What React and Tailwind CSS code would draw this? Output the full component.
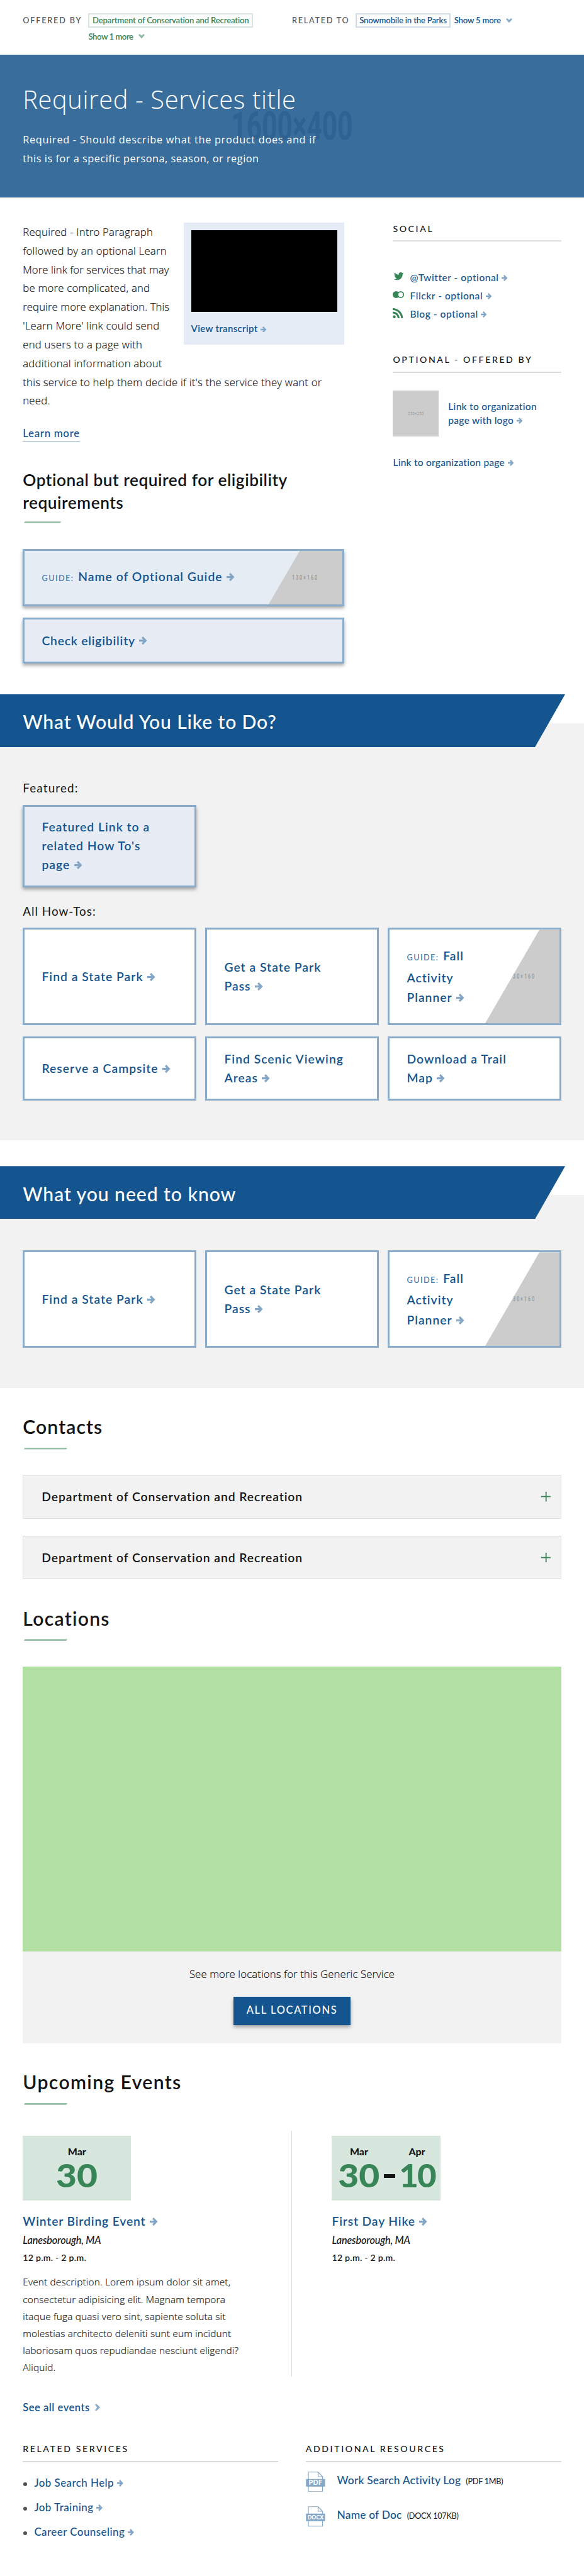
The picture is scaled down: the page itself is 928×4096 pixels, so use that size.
import React from "react";

function Arrow({ className = "w-[14px] h-[14.5px] ml-[7px]" }) {
  return (
    <svg viewBox="0 0 14 14" preserveAspectRatio="none" className={"inline-block align-baseline text-[#83a6c6] " + className} fill="none" stroke="currentColor" strokeWidth="3.500">
      <path d="M0 7h11" />
      <path d="M5.600 1.200L11.400 7 5.600 12.800" />
    </svg>
  );
}

const SMALL_ARROW = "w-[10.500px] h-[11px] ml-[5px]";

function ChevronDown({ className }) {
  return (
    <svg viewBox="0 0 11 8" className={"inline-block w-[11px] h-[8px] ml-[9px] align-[1px] " + className} fill="currentColor">
      <path d="M0 1.900L2.100 0L5.500 3.100L8.900 0L11 1.900L5.500 8Z" />
    </svg>
  );
}

function TwitterIcon() {
  return (
    <svg viewBox="0 0 24 20" className="w-[17px] h-[14px] mt-[7px] ml-[1.5px]" fill="#388557">
      <path d="M24 2.4c-.9.4-1.8.7-2.8.8 1-.6 1.8-1.6 2.2-2.7-1 .6-2 1-3.1 1.2A4.9 4.9 0 0 0 11.9 6.200C7.800 6 4.200 4 1.700.900a4.900 4.900 0 0 0 1.500 6.600c-.8 0-1.600-.2-2.200-.6v.1c0 2.400 1.700 4.400 3.900 4.800-.7.2-1.500.2-2.200.1.6 2 2.400 3.400 4.600 3.400A9.900 9.900 0 0 1 0 17.300 14 14 0 0 0 7.500 19.500c9.100 0 14-7.500 14-14v-.6c1-.7 1.800-1.600 2.500-2.500z" />
    </svg>
  );
}

function FlickrIcon() {
  return (
    <svg viewBox="0 0 20 12" className="w-[20px] h-[12px] mt-[8px]">
      <circle cx="6" cy="6" r="6" fill="#388557" />
      <circle cx="14" cy="6" r="5" fill="#fff" stroke="#388557" strokeWidth="1.900" />
    </svg>
  );
}

function RssIcon() {
  return (
    <svg viewBox="0 0 18 18" className="w-[18px] h-[18px] mt-[5px]" fill="none" stroke="#388557">
      <circle cx="2.700" cy="15.300" r="2.500" fill="#388557" stroke="none" />
      <path d="M0 7.600A10.400 10.400 0 0 1 10.400 18" strokeWidth="3.300" />
      <path d="M0 1.700A16.300 16.300 0 0 1 16.300 18" strokeWidth="3.300" />
    </svg>
  );
}

function DocIcon({ label }) {
  return (
    <svg viewBox="0 0 34 36" className="w-[34px] h-[36px] shrink-0">
      <path d="M4.500 .8H21.500L29.300 8.800V35H4.500Z" fill="#fff" stroke="#86a8c8" strokeWidth="1.300" />
      <path d="M21.500 .8V8.800H29.300" fill="none" stroke="#86a8c8" strokeWidth="1.300" />
      <rect x="0.300" y="13" width="33.400" height="13.300" fill="#86a8c8" />
      <text x="17" y="23.600" textAnchor="middle" fontFamily="Lato, sans-serif" fontWeight="900" fontSize={label === "PDF" ? 11.5 : 10.5} fill="#fff" textLength={label === "PDF" ? 24 : 28} lengthAdjust="spacingAndGlyphs">
        {label}
      </text>
    </svg>
  );
}

function SideHeading({ className = "", children }) {
  return (
    <h3 className={"text-[15.6px] leading-[24px] font-medium tracking-[2.85px] pb-[9px] border-b-[2.3px] border-[#dcdcdc] whitespace-nowrap " + className}>
      {children}
    </h3>
  );
}

function Heading({ className = "", children }) {
  return (
    <h2 className={"mt-[47.8px] text-[33.3px] leading-[40px] font-semibold " + className}>
      {children}
      <span className="block mt-[17.2px] ml-[2px] w-[76px] h-[3px] bg-[#96c0a8] [clip-path:polygon(1.500px_0,100%_0,calc(100%-1.500px)_100%,0_100%)]" />
    </h2>
  );
}

function Band({ className, children }) {
  return (
    <div className="-mt-[51px] w-[991px] h-[93px] pl-[40px] pt-[28px] bg-[#14558f] [clip-path:polygon(0_0,100%_0,938px_100%,0_100%)]">
      <h2 className={"text-[33.3px] leading-[40px] font-medium text-white " + className}>{children}</h2>
    </div>
  );
}

function Placeholder({ className }) {
  return (
    <div className={"absolute right-0 top-0 bottom-0 w-[130px] bg-[#cccccc] flex items-center justify-center " + className}>
      <span className="font-['Roboto',sans-serif] text-[13px] font-medium tracking-[3.400px] leading-none text-[#979797] scale-x-[0.62] whitespace-nowrap">
        130×160
      </span>
    </div>
  );
}

function GuideLabel() {
  return <span className="text-[14px] font-medium tracking-[1.6px] text-[#4478a8] mr-[7.5px]">GUIDE:</span>;
}

function Card({ lines, guide, tone = "bg-white", className = "" }) {
  return (
    <a className={"relative flex items-center border-[3.4px] border-[#8aabca] pl-[30px] text-[21.3px] font-semibold text-[#14558f] tracking-[1.12px] whitespace-nowrap " + tone + " " + className}>
      {guide && <Placeholder className="[clip-path:polygon(95px_0,100%_0,100%_100%,0_100%)]" />}
      <span className={"relative " + (guide ? "leading-[35px]" : "leading-[33px]")}>
        {lines.map((line, i) => (
          <span key={line} className="block">
            {guide && i === 0 && <GuideLabel />}
            {line}
            {i === lines.length - 1 && <Arrow />}
          </span>
        ))}
      </span>
    </a>
  );
}

function Accordion({ className }) {
  return (
    <div className={"h-[76.5px] flex items-center justify-between bg-[#f2f2f2] border-y-[2px] border-x border-[#dcdcdc] pl-[32px] pr-[17px] " + className}>
      <span className="text-[21.3px] leading-[33px] font-semibold tracking-[1.04px]">Department of Conservation and Recreation</span>
      <svg viewBox="0 0 17 17" className="w-[17px] h-[17px]" stroke="#388557" strokeWidth="2">
        <path d="M0 8.500h17M8.500 0v17" />
      </svg>
    </div>
  );
}

function EventBody({ title }) {
  return (
    <>
      <h3 className="mt-[21.5px] text-[21.3px] leading-[30px] font-semibold tracking-[0.94px] text-[#14558f]">
        {title}
        <Arrow />
      </h3>
      <p className="mt-[3.5px] text-[18px] leading-[28px] italic font-medium tracking-[-0.2px]">Lanesborough, MA</p>
      <p className="mt-[5px] text-[15.6px] leading-[24px] font-semibold tracking-[0.28px]">12 p.m. - 2 p.m.</p>
    </>
  );
}

const LIGHT = "font-['Open_Sans',sans-serif] font-light whitespace-nowrap ";
const INK = "[-webkit-text-stroke:0.2px_#141414] ";

export default function App() {
  return (
    <div className="w-[1024px] h-[4520px] [zoom:0.90625] overflow-hidden bg-white text-[#141414] font-['Lato',sans-serif] flex flex-col">
      <header className="h-[96px] pt-[23px] pl-[40px] flex shrink-0 text-[14.5px] font-semibold tracking-[-0.2px] leading-[26px]">
        <div className="w-[472px] flex">
          <div className="w-[115px] text-[14px] font-medium tracking-[2px] leading-[25px] text-[#535353]">OFFERED BY</div>
          <div className="text-[#388557]">
            <div className="h-[25px] border-[2.3px] border-[#d7e6dd] px-[5px] leading-[20px]">Department of Conservation and Recreation</div>
            <div className="mt-[3.4px] tracking-[-0.5px]">
              Show 1 more
              <ChevronDown className="text-[#8dbaa0]" />
            </div>
          </div>
        </div>
        <div className="w-[111px] text-[14px] font-medium tracking-[1.9px] leading-[25px] text-[#535353]">RELATED TO</div>
        <div className="h-[25px] border-[2.3px] border-[#d0dce9] px-[5px] leading-[20px] text-[#14558f]">Snowmobile in the Parks</div>
        <div className="ml-[6px] leading-[25px] text-[#14558f]">
          Show 5 more
          <ChevronDown className="text-[#8aabca]" />
        </div>
      </header>

      <section className="relative h-[250px] shrink-0 bg-[#396d9c] pl-[40px] pt-[53px] text-white">
        <span className="absolute left-[512px] top-[126px] -translate-x-1/2 -translate-y-1/2 scale-x-[0.68] font-['Roboto',sans-serif] font-bold text-[69px] leading-none text-[#2d6293] whitespace-nowrap">
          1600×400
        </span>
        <h1 className={"relative text-[44px] leading-[50px] tracking-[0.66px] " + LIGHT}>Required - Services title</h1>
        <p className="relative mt-[29px] font-['Open_Sans',sans-serif] text-[18px] leading-[33.3px] tracking-[0.77px]">
          Required - Should describe what the product does and if
          <br />
          <span className="tracking-[0.57px]">this is for a specific persona, season, or region</span>
        </p>
      </section>

      <main className="h-[872px] shrink-0 pl-[40px] flex">
        <div className="w-[564px] pt-[44.5px]">
          <figure className="float-right w-[282px] h-[214px] bg-[#e5ecf5] p-[13px]">
            <div className="w-[256px] h-[144px] bg-black" />
            <figcaption className="mt-[18px] text-[16.6px] leading-[24px] font-semibold tracking-[0.35px] text-[#14558f]">
              View transcript
              <Arrow className={SMALL_ARROW} />
            </figcaption>
          </figure>
          <p className={"text-[18.5px] leading-[32.93px] tracking-[0.25px] " + LIGHT + INK}>
            Required - Intro Paragraph
            <br />
            followed by an optional Learn
            <br />
            <span className="tracking-[0.08px]">More link for services that may</span>
            <br />
            be more complicated, and
            <br />
            <span className="tracking-[0.08px]">require more explanation. This</span>
            <br />
            'Learn More' link could send
            <br />
            end users to a page with
            <br />
            additional information about
            <br />
            this service to help them decide if it's the service they want or
            <br />
            need.
          </p>
          <a className="clear-both block w-fit mt-[25px] text-[18.7px] leading-[30px] font-medium tracking-[0.72px] text-[#14558f] border-b border-[#8aabca]">Learn more</a>
          <h2 className="mt-[45.7px] text-[29px] leading-[40px] font-semibold tracking-[0.58px]">
            Optional but required for eligibility
            <br />
            requirements
            <span className="block mt-[13.5px] ml-[2px] w-[65px] h-[3px] bg-[#96c0a8] [clip-path:polygon(1.500px_0,100%_0,calc(100%-1.500px)_100%,0_100%)]" />
          </h2>
          <a className="relative mt-[45px] h-[101px] flex items-center border-[3.4px] border-[#8aabca] bg-[#e5ecf4] pl-[30px] shadow-[0_4px_6px_rgba(0,0,0,0.35)]">
            <Placeholder className="[clip-path:polygon(55px_0,100%_0,100%_100%,0_100%)]" />
            <span className="relative text-[21.3px] leading-[33px] font-semibold tracking-[1.12px] text-[#14558f]">
              <GuideLabel />
              Name of Optional Guide
              <Arrow />
            </span>
          </a>
          <a className="mt-[20px] h-[79.5px] flex items-center border-[3.4px] border-[#8aabca] bg-[#e8edf5] pl-[30px] shadow-[0_4px_6px_rgba(0,0,0,0.35)]">
            <span className="text-[21.3px] leading-[33px] font-semibold tracking-[0.88px] text-[#14558f]">
              Check eligibility
              <Arrow />
            </span>
          </a>
        </div>

        <aside className="ml-[85px] w-[295px] pt-[43px]">
          <SideHeading>SOCIAL</SideHeading>
          <ul className="mt-[47px] text-[17.2px] leading-[32px] font-medium tracking-[0.57px] text-[#14558f]">
            <li className="flex h-[32px]">
              <span className="w-[30px]"><TwitterIcon /></span>
              <span>@Twitter - optional<Arrow className={SMALL_ARROW} /></span>
            </li>
            <li className="flex h-[32px]">
              <span className="w-[30px]"><FlickrIcon /></span>
              <span>Flickr - optional<Arrow className={SMALL_ARROW} /></span>
            </li>
            <li className="flex h-[32px]">
              <span className="w-[30px]"><RssIcon /></span>
              <span>Blog - optional<Arrow className={SMALL_ARROW} /></span>
            </li>
          </ul>
          <SideHeading className="mt-[52px]">OPTIONAL - OFFERED BY</SideHeading>
          <div className="mt-[31px] flex items-center gap-[17px] text-[#14558f]">
            <div className="w-[80px] h-[80px] bg-[#cccccc] flex items-center justify-center">
              <span className="font-['Roboto',sans-serif] text-[8.5px] tracking-[0.6px] leading-none text-[#969696] scale-x-[0.75]">250×250</span>
            </div>
            <a className="text-[17.2px] leading-[24.300px] font-medium tracking-[0.28px]">
              Link to organization
              <br />
              page with logo
              <Arrow className={SMALL_ARROW} />
            </a>
          </div>
          <a className="block mt-[34.4px] text-[17.2px] leading-[24px] font-medium tracking-[0.24px] text-[#14558f]">
            Link to organization page
            <Arrow className={SMALL_ARROW} />
          </a>
        </aside>
      </main>

      <section className="mt-[51px] h-[732px] shrink-0 bg-[#f2f2f2] flex flex-col">
        <Band className="tracking-[0.91px]">What Would You Like to Do?</Band>
        <div className="px-[40px]">
          <h3 className="mt-[56px] text-[20.8px] leading-[30px] tracking-[1.28px]">Featured:</h3>
          <Card lines={["Featured Link to a", "related How To's", "page"]} tone="bg-[#e8edf5]" className="mt-[15px] w-[304px] h-[145px] shadow-[0_4px_6px_rgba(0,0,0,0.35)]" />
          <h3 className="mt-[26.5px] text-[20.8px] leading-[30px] tracking-[1.14px]">All How-Tos:</h3>
          <div className="mt-[14.5px] grid grid-cols-3 gap-x-[16px] gap-y-[20px] grid-rows-[171px_112px]">
            <Card lines={["Find a State Park"]} />
            <Card lines={["Get a State Park", "Pass"]} />
            <Card guide lines={["Fall", "Activity", "Planner"]} />
            <Card lines={["Reserve a Campsite"]} />
            <Card lines={["Find Scenic Viewing", "Areas"]} />
            <Card lines={["Download a Trail", "Map"]} />
          </div>
        </div>
      </section>

      <section className="mt-[96px] h-[338px] shrink-0 bg-[#f2f2f2] flex flex-col">
        <Band className="tracking-[1.02px]">What you need to know</Band>
        <div className="mt-[55px] px-[40px] grid grid-cols-3 gap-x-[16px] grid-rows-[171px]">
          <Card lines={["Find a State Park"]} />
          <Card lines={["Get a State Park", "Pass"]} />
          <Card guide lines={["Fall", "Activity", "Planner"]} />
        </div>
      </section>

      <div className="px-[40px] flex flex-col">
        <Heading className="tracking-[1.19px]">Contacts</Heading>
        <Accordion className="mt-[45px]" />
        <Accordion className="mt-[30px]" />

        <Heading className="tracking-[1.41px]">Locations</Heading>
        <div className="mt-[45px] h-[500px] bg-[#b2dfa2]" />
        <div className="h-[161px] bg-[#f2f2f2] pt-[24.5px] flex flex-col items-center">
          <p className={"text-[18.5px] leading-[30px] tracking-[0.11px] " + LIGHT + INK}>See more locations for this Generic Service</p>
          <a className="mt-[24.5px] w-[205px] h-[50px] bg-[#14558f] text-white text-[18.2px] leading-[48px] font-medium tracking-[1.8px] text-center shadow-[0_4px_6px_rgba(0,0,0,0.35)]">ALL LOCATIONS</a>
        </div>

        <Heading className="tracking-[1.5px]">Upcoming Events</Heading>
        <div className="mt-[45px] h-[432px] flex">
          <article className="w-[472px] pt-[9px] border-r border-[#dcdcdc]">
            <div className="w-[190px] h-[114px] bg-[#d8e7dd] pt-[16px] text-center">
              <div className="text-[17.5px] leading-[24px] font-black">Mar</div>
              <div className="mt-[4px] text-[56px] leading-[50px] font-black scale-x-[1.12] text-[#388557]">30</div>
            </div>
            <EventBody title="Winter Birding Event" />
            <p className={"mt-[16.4px] text-[17px] leading-[30px] tracking-[0.19px] " + LIGHT + INK}>
              Event description. Lorem ipsum dolor sit amet,
              <br />
              consectetur adipisicing elit. Magnam tempora
              <br />
              itaque fuga quasi vero sint, sapiente soluta sit
              <br />
              molestias architecto deleniti sunt eum incidunt
              <br />
              laboriosam quos repudiandae nesciunt eligendi?
              <br />
              Aliquid.
            </p>
          </article>
          <article className="pl-[70px] pt-[9px]">
            <div className="w-[190px] h-[114px] bg-[#d8e7dd] pt-[16px] pl-[12px] flex text-center">
              <div className="w-[71px]">
                <div className="text-[17.5px] leading-[24px] font-black">Mar</div>
                <div className="mt-[4px] text-[56px] leading-[50px] font-black scale-x-[1.12] text-[#388557]">30</div>
              </div>
              <div className="mt-[52px] ml-[8px] w-[20px] h-[6px] bg-[#141414]" />
              <div className="ml-[5px] w-[66px]">
                <div className="text-[17.5px] leading-[24px] font-black">Apr</div>
                <div className="mt-[4px] text-[56px] leading-[50px] font-black tracking-[-2px] scale-x-[1.04] text-[#388557]">10</div>
              </div>
            </div>
            <EventBody title="First Day Hike" />
          </article>
        </div>
        <a className="mt-[39.5px] text-[18.2px] leading-[30px] font-semibold tracking-[0.6px] text-[#14558f]">
          See all events
          <svg viewBox="0 0 9 13" className="inline-block w-[9px] h-[13px] ml-[9px] align-baseline" fill="#8aabca">
            <path d="M2.200 0L9 6.500L2.200 13L0 11.200L3.600 6.500L0 1.800Z" />
          </svg>
        </a>

        <div className="mt-[45.5px] flex gap-[48px]">
          <div className="w-[448px]">
            <SideHeading>RELATED SERVICES</SideHeading>
            <ul className="mt-[15.3px] text-[18.7px] leading-[43px] font-medium tracking-[0.5px] text-[#14558f]">
              {["Job Search Help", "Job Training", "Career Counseling"].map((item) => (
                <li key={item} className="flex items-center h-[43px]">
                  <span className="w-[6px] h-[6px] rounded-full bg-[#535353] ml-[1px] mr-[13px] mt-[3px]" />
                  <span>
                    {item}
                    <Arrow className="w-[11px] h-[12px] ml-[5px]" />
                  </span>
                </li>
              ))}
            </ul>
          </div>
          <div className="w-[448px]">
            <SideHeading>ADDITIONAL RESOURCES</SideHeading>
            <ul className="mt-[16px] text-[19.2px] leading-[30px] font-medium tracking-[0.2px] text-[#14558f]">
              <li className="flex h-[61px]">
                <DocIcon label="PDF" />
                <span className="ml-[21px]">
                  Work Search Activity Log
                  <span className="ml-[9px] text-[14px] font-normal tracking-[-0.3px] text-[#141414]">(PDF 1MB)</span>
                </span>
              </li>
              <li className="flex h-[61px]">
                <DocIcon label="DOCX" />
                <span className="ml-[21px]">
                  Name of Doc
                  <span className="ml-[9px] text-[14px] font-normal tracking-[-0.3px] text-[#141414]">(DOCX 107KB)</span>
                </span>
              </li>
            </ul>
          </div>
        </div>
      </div>
    </div>
  );
}
